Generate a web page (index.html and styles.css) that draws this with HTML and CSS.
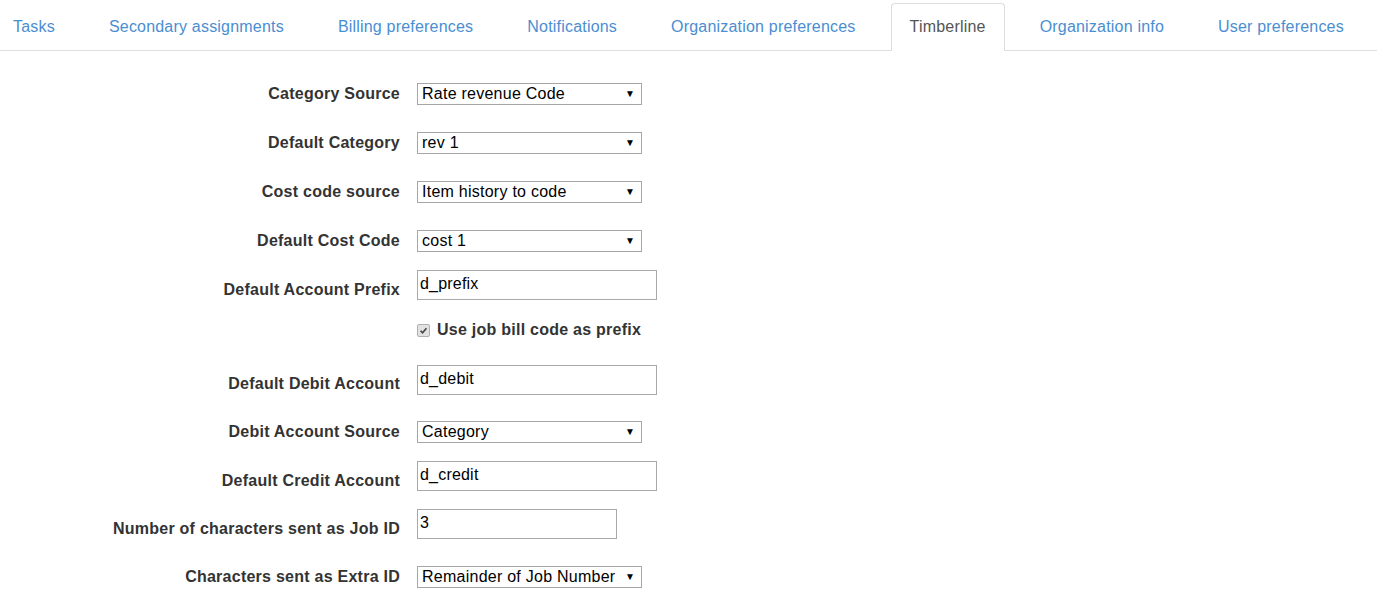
FILE: index.html
```html
<!DOCTYPE html>
<html>
<head>
<meta charset="utf-8">
<link rel="stylesheet" href="styles.css">
</head>
<body>
<ul class="tabs">
  <li class="tab first"><a>Tasks</a></li>
  <li class="tab"><a>Secondary assignments</a></li>
  <li class="tab"><a>Billing preferences</a></li>
  <li class="tab"><a>Notifications</a></li>
  <li class="tab"><a>Organization preferences</a></li>
  <li class="tab active"><a>Timberline</a></li>
  <li class="tab"><a>Organization info</a></li>
  <li class="tab"><a>User preferences</a></li>
</ul>

<form class="form">
  <div class="row">
    <label class="lbl">Category Source</label>
    <div class="sel"><select><option>Rate revenue Code</option></select></div>
  </div>
  <div class="row">
    <label class="lbl">Default Category</label>
    <div class="sel"><select><option>rev 1</option></select></div>
  </div>
  <div class="row">
    <label class="lbl">Cost code source</label>
    <div class="sel"><select><option>Item history to code</option></select></div>
  </div>
  <div class="row">
    <label class="lbl">Default Cost Code</label>
    <div class="sel"><select><option>cost 1</option></select></div>
  </div>
  <div class="row">
    <label class="lbl">Default Account Prefix</label>
    <input class="txt" type="text" value="d_prefix">
  </div>
  <div class="row check-row">
    <span class="lbl"></span>
    <label class="check"><span class="box"><svg viewBox="0 0 13 13" width="13" height="13"><path d="M3 6.8 L5.4 9.2 L10 3.8" fill="none" stroke="#444" stroke-width="1.9"/></svg></span>Use job bill code as prefix</label>
  </div>
  <div class="row tight">
    <label class="lbl">Default Debit Account</label>
    <input class="txt" type="text" value="d_debit">
  </div>
  <div class="row tight">
    <label class="lbl">Debit Account Source</label>
    <div class="sel"><select><option>Category</option></select></div>
  </div>
  <div class="row tight">
    <label class="lbl">Default Credit Account</label>
    <input class="txt" type="text" value="d_credit">
  </div>
  <div class="row tight">
    <label class="lbl">Number of characters sent as Job ID</label>
    <input class="txt num" type="text" value="3">
  </div>
  <div class="row tight">
    <label class="lbl">Characters sent as Extra ID</label>
    <div class="sel"><select><option>Remainder of Job Number</option></select></div>
  </div>
</form>
</body>
</html>
```

FILE: styles.css
```css
html, body {
  margin: 0;
  padding: 0;
  background: #fff;
  font-family: "Liberation Sans", Arial, sans-serif;
  color: #333;
  overflow: hidden;
}

.tabs {
  list-style: none;
  margin: 3px 0 0 0;
  padding: 0;
  display: flex;
  flex-wrap: nowrap;
  gap: 16px;
  border-bottom: 1px solid #ddd;
}

.tab {
  flex: none;
  margin-bottom: -1px;
}

.tab a {
  display: block;
  white-space: nowrap;
  padding: 13px 18px 13px 18px;
  line-height: 20px;
  font-size: 16px;
  letter-spacing: 0.2px;
  color: #4a8ed2;
  border: 1px solid transparent;
  border-radius: 4px 4px 0 0;
}

.tab.first a {
  padding-left: 12px;
}

.tab.active a {
  color: #555;
  background: #fff;
  border-color: #ddd #ddd transparent #ddd;
}

.form {
  margin-top: 18px;
}

.row {
  display: flex;
  align-items: center;
  height: 49px;
}

.row.tight {
  height: 48.25px;
}

.check-row {
  height: 46px;
  align-items: flex-start;
}

.lbl {
  width: 400px;
  flex: none;
  text-align: right;
  font-weight: bold;
  font-size: 16px;
  letter-spacing: 0.25px;
  color: #333;
  margin-right: 17px;
  white-space: nowrap;
}

.sel {
  position: relative;
  width: 225px;
  height: 22px;
}

.sel select {
  appearance: none;
  -webkit-appearance: none;
  width: 225px;
  height: 22px;
  margin: 0;
  border: 1px solid #a6a6a6;
  border-radius: 0;
  background: #fff;
  font-family: "Liberation Sans", Arial, sans-serif;
  font-size: 16px;
  letter-spacing: 0.25px;
  color: #000;
  padding: 0 0 0 4px;
  line-height: 20px;
}

.sel::after {
  content: "\25BC";
  position: absolute;
  right: 7px;
  top: 5px;
  font-size: 10px;
  line-height: 12px;
  color: #000;
  pointer-events: none;
}

.txt {
  box-sizing: border-box;
  width: 240px;
  height: 30px;
  margin: 0 0 9px 0;
  border: 1px solid #a9a9a9;
  border-radius: 0;
  padding: 0 0 2px 2px;
  font-family: "Liberation Sans", Arial, sans-serif;
  font-size: 16px;
  letter-spacing: 0.2px;
  color: #000;
}

.txt.num {
  width: 200px;
}

.check {
  display: flex;
  align-items: center;
  font-weight: bold;
  font-size: 16px;
  letter-spacing: 0.25px;
  color: #333;
  margin-top: 7px;
  white-space: nowrap;
}

.box {
  width: 11px;
  height: 11px;
  border: 1px solid #b0b0b0;
  border-radius: 2px;
  background: #e2e2e2;
  margin-right: 7px;
  display: flex;
  align-items: center;
  justify-content: center;
}

.box svg {
  width: 11px;
  height: 11px;
}
```
